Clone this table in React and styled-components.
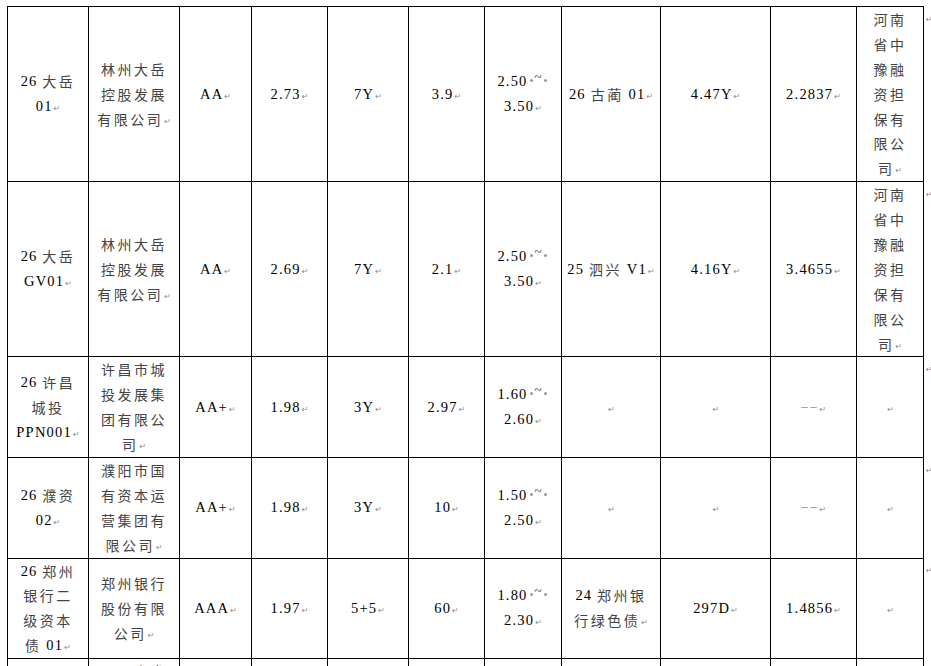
import React from "react";
import styled, { createGlobalStyle } from "styled-components";

const GlobalStyle = createGlobalStyle`
  html, body { margin: 0; padding: 0; background: #fff; }
  body { font-family: "Liberation Serif", "Noto Sans CJK SC", serif; }
`;

const Page = styled.div`
  padding: 6px 0 0 7px;
`;

const Table = styled.table`
  border-collapse: collapse;
  table-layout: fixed;
  width: 926px;
`;

const Cell = styled.td`
  border: 1px solid #000;
  padding: 0;
  text-align: center;
  vertical-align: middle;
  font-size: 14px;
  color: #000;
  white-space: nowrap;
  overflow: hidden;
`;

const Line = styled.div`
  height: 24.9px;
  line-height: 25px;
  overflow: visible;
`;

const RowEnd = styled.td`
  border: none;
  padding: 4px 0 0 1px;
  vertical-align: top;
  line-height: 12px;
  text-align: left;
`;

const Latin = styled.span`
  font-family: "Liberation Serif", serif;
  font-size: 14.5px;
  letter-spacing: 1.2px;
  color: #000;
  vertical-align: top;
`;

const Han = styled.span`
  font-family: "Noto Sans CJK SC", sans-serif;
  font-size: 14px;
  letter-spacing: 2.5px;
  color: #444;
  vertical-align: top;
`;

const Mark = styled.span`
  font-family: "DejaVu Sans", sans-serif;
  font-size: 8px;
  color: #8a8a8a;
  letter-spacing: 0;
  margin-left: 1px;
`;

const SpaceDot = styled.span`
  display: inline-block;
  width: 3px;
  height: 3px;
  margin: 0 2px;
  border-radius: 50%;
  background: #9a9a9a;
  vertical-align: 4px;
`;

const Tilde = styled.span`
  font-family: "Liberation Serif", serif;
  font-size: 13px;
  position: relative;
  top: -5px;
  color: #222;
`;

const Dash = styled.span`
  font-family: "Liberation Serif", serif;
  font-size: 14px;
  color: #8a8a8a;
  letter-spacing: 1px;
`;

const HAN_RE = /[\u3000-\u303f\u3400-\u9fff\uff00-\uffef]/;

function Runs({ line }) {
  const runs = [];
  let cur = "";
  let curHan = null;
  for (const ch of line) {
    const h = HAN_RE.test(ch);
    if (curHan === null || h === curHan) {
      cur += ch;
    } else {
      runs.push([curHan, cur]);
      cur = ch;
    }
    curHan = h;
  }
  if (cur) runs.push([curHan, cur]);
  return runs.map(([h, t], i) =>
    h ? <Han key={i}>{t}</Han> : <Latin key={i}>{t}</Latin>
  );
}

function Text({ value }) {
  const lines = value.split("\n");
  return lines.map((l, i) => (
    <Line key={i}>
      <Runs line={l} />
      {i === lines.length - 1 && <Mark>↵</Mark>}
    </Line>
  ));
}

function Range({ from, to }) {
  return (
    <>
      <Line>
        <Latin>{from}</Latin>
        <SpaceDot />
        <Tilde>~</Tilde>
        <SpaceDot />
      </Line>
      <Line>
        <Latin>{to}</Latin>
        <Mark>↵</Mark>
      </Line>
    </>
  );
}

function Content({ value }) {
  if (value && typeof value === "object") return <Range {...value} />;
  if (value === "--")
    return (
      <Line>
        <Dash>−−</Dash>
        <Mark>↵</Mark>
      </Line>
    );
  return <Text value={value || ""} />;
}

const widths = [81, 91, 72, 76, 81, 76, 77, 99, 110, 86, 67, 10];

const guarantor = "河南\n省中\n豫融\n资担\n保有\n限公\n司";

const rows = [
  ["26 大岳\n01", "林州大岳\n控股发展\n有限公司", "AA", "2.73", "7Y", "3.9", { from: "2.50", to: "3.50" }, "26 古蔺 01", "4.47Y", "2.2837", guarantor],
  ["26 大岳\nGV01", "林州大岳\n控股发展\n有限公司", "AA", "2.69", "7Y", "2.1", { from: "2.50", to: "3.50" }, "25 泗兴 V1", "4.16Y", "3.4655", guarantor],
  ["26 许昌\n城投\nPPN001", "许昌市城\n投发展集\n团有限公\n司", "AA+", "1.98", "3Y", "2.97", { from: "1.60", to: "2.60" }, "", "", "--", ""],
  ["26 濮资\n02", "濮阳市国\n有资本运\n营集团有\n限公司", "AA+", "1.98", "3Y", "10", { from: "1.50", to: "2.50" }, "", "", "--", ""],
  ["26 郑州\n银行二\n级资本\n债 01", "郑州银行\n股份有限\n公司", "AAA", "1.97", "5+5", "60", { from: "1.80", to: "2.30" }, "24 郑州银\n行绿色债", "297D", "1.4856", ""],
  ["26 平发\n01", "平顶山发\n展投资控\n股集团有\n限公司", "AA+", "2.10", "5Y", "8", { from: "2.00", to: "2.80" }, "", "", "--", ""],
];

export default function App() {
  return (
    <>
      <GlobalStyle />
      <Page>
        <Table>
          <colgroup>
            {widths.map((w, i) => (
              <col key={i} style={{ width: w }} />
            ))}
          </colgroup>
          <tbody>
            {rows.map((r, ri) => (
              <tr key={ri}>
                {r.map((c, ci) => (
                  <Cell key={ci}>
                    <Content value={c} />
                  </Cell>
                ))}
                <RowEnd>
                  <Mark>↵</Mark>
                </RowEnd>
              </tr>
            ))}
          </tbody>
        </Table>
      </Page>
    </>
  );
}
